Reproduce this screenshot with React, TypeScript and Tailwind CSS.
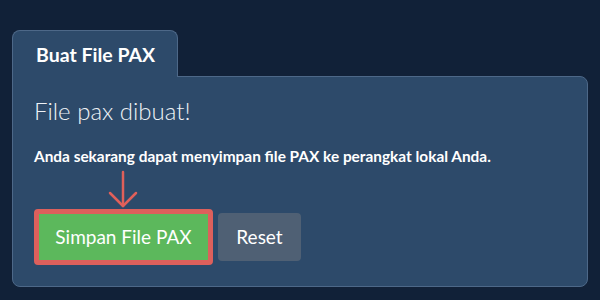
import React from "react";

export default function App() {
  return (
    <div
      className="w-[600px] h-[300px] bg-[#112138] pt-[30px] px-[12px]"
      style={{ fontFamily: "Lato, 'Noto Sans', sans-serif" }}
    >
      <div className="relative z-10 -mb-px w-[166px] h-[47px] rounded-t-lg border border-b-0 border-[#4d6888] bg-[#2d4a6a] pl-[23px] pt-[12px]">
        <span className="text-[19.5px] font-bold text-white leading-[24px]">Buat File PAX</span>
      </div>
      <div className="h-[211px] rounded-lg rounded-tl-none border border-[#4d6888] bg-[#2d4a6a] pl-[21px] pt-[19px]">
        <h1 className="text-[24px] font-light text-[#eef2f6] leading-[30px]">File pax dibuat!</h1>
        <p className="mt-[20px] text-[15.4px] font-bold text-white leading-[20px]">
          Anda sekarang dapat menyimpan file PAX ke perangkat lokal Anda.
        </p>
        <div className="ml-[74px] mt-[4px] h-[39px] w-[30px]">
          <svg width="30" height="39" viewBox="0 0 30 39" fill="none" stroke="#e0605a" strokeWidth="2.5" strokeLinecap="round" strokeLinejoin="round">
            <path d="M15 2 V36" />
            <path d="M2 23 L15 36 L28 23" />
          </svg>
        </div>
        <div className="flex items-center gap-[5px]">
          <div className="rounded-[4px] border-[5px] border-[#dd605c]">
            <button className="h-[46px] w-[169px] bg-[#5cb85c] text-[19px] text-white">Simpan File PAX</button>
          </div>
          <button className="h-[48px] w-[83px] rounded-[4px] bg-[#4f6074] text-[19px] text-white">Reset</button>
        </div>
      </div>
    </div>
  );
}
